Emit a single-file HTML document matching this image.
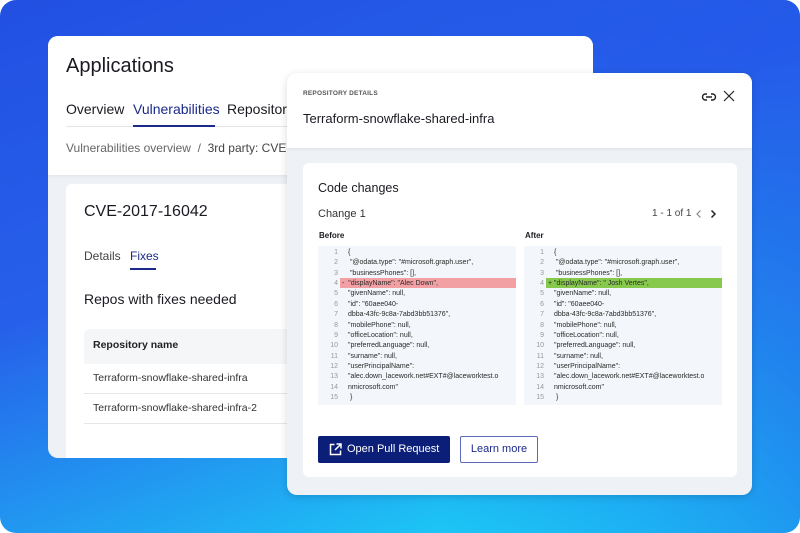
<!DOCTYPE html>
<html><head><meta charset="utf-8"><style>
*{margin:0;padding:0;box-sizing:border-box}
html,body{width:800px;height:533px;overflow:hidden;background:#fff}
body{font-family:"Liberation Sans",sans-serif;color:#1a1a22;position:relative}
.bg{position:absolute;left:0;top:0;width:800px;height:533px;border-radius:16px;overflow:hidden;
background:linear-gradient(160deg,#2250e2 0%,#2660ea 40%,#20a8f2 72%,#18ecfa 100%)}
.bg:after{content:"";position:absolute;inset:0;background:linear-gradient(90deg,rgba(0,0,0,0) 55%,rgba(35,85,232,.55) 100%)}
.a{position:absolute}
.card1{left:48px;top:36px;width:545px;height:422px;background:#eef1f5;border-radius:10px;overflow:hidden}
.card1 .hd{position:absolute;left:0;top:0;width:100%;height:139px;background:#fff;box-shadow:0 1px 3px rgba(0,0,0,.06)}
.inner1{position:absolute;left:18px;top:148px;width:540px;height:300px;background:#fff;border-radius:6px}
.modal{left:287px;top:73px;width:465px;height:422px;background:#eef2f6;border-radius:10px;overflow:hidden;box-shadow:0 2px 8px rgba(0,0,0,.15)}
.modal .hd{position:absolute;left:0;top:0;width:100%;height:75px;background:#fff;box-shadow:0 1px 3px rgba(0,0,0,.08)}
.inner2{position:absolute;left:16px;top:90px;width:434px;height:314px;background:#fff;border-radius:6px}
.code{position:absolute;top:246px;width:198px;height:159px;background:#f3f6fa;font-size:7px;color:#2a2a2a}
.ln{position:absolute;left:0;width:20px;text-align:right;color:#999}
.tx{position:absolute;left:30px;white-space:pre}
.hl{position:absolute;left:22px;width:176px;height:10px}
</style></head><body>
<div class="bg"></div>

<div class="a card1">
 <div class="hd"></div>
 <div class="a" style="left:18px;top:19px;font-size:20px">Applications</div>
 <div class="a" style="left:18px;top:65px;font-size:14px">Overview</div>
 <div class="a" style="left:85px;top:65px;font-size:14px;color:#1a2a8a">Vulnerabilities</div>
 <div class="a" style="left:179px;top:65px;font-size:14px">Repositories</div>
 <div class="a" style="left:18px;top:90px;width:520px;height:1px;background:#e3e5ea"></div>
 <div class="a" style="left:85px;top:89px;width:82px;height:2px;background:#1a2a8a"></div>
 <div class="a" style="left:18px;top:105px;font-size:12px;color:#666">Vulnerabilities overview &nbsp;/&nbsp; <span style="color:#444">3rd party: CVE-2017-16042</span></div>
 <div class="inner1">
  <div class="a" style="left:18px;top:19px;font-size:16px">CVE-2017-16042</div>
  <div class="a" style="left:18px;top:65px;font-size:12px;color:#444">Details</div>
  <div class="a" style="left:64px;top:65px;font-size:12px;color:#1a2a8a">Fixes</div>
  <div class="a" style="left:64px;top:84px;width:26px;height:2px;background:#1a2a8a"></div>
  <div class="a" style="left:18px;top:107px;font-size:14px">Repos with fixes needed</div>
  <div class="a" style="left:18px;top:145px;width:520px;height:35px;background:#f5f6f8;border-radius:6px 0 0 0"></div>
  <div class="a" style="left:27px;top:155px;font-size:10.5px;font-weight:bold;color:#222">Repository name</div>
  <div class="a" style="left:27px;top:188px;font-size:10.5px;color:#333">Terraform-snowflake-shared-infra</div>
  <div class="a" style="left:18px;top:209px;width:520px;height:1px;background:#e6e7ea"></div>
  <div class="a" style="left:27px;top:218px;font-size:10.5px;color:#333">Terraform-snowflake-shared-infra-2</div>
  <div class="a" style="left:18px;top:239px;width:520px;height:1px;background:#e6e7ea"></div>
 </div>
</div>

<div class="a modal">
 <div class="hd"></div>
 <div class="a" style="left:16px;top:17px;font-size:6.5px;font-weight:bold;color:#555;letter-spacing:.2px">REPOSITORY DETAILS</div>
 <div class="a" style="left:16px;top:38px;font-size:13px">Terraform-snowflake-shared-infra</div>
 <svg class="a" style="left:414px;top:18px" width="16" height="12" viewBox="0 0 16 12"><path d="M6 3H4.5a3 3 0 000 6H6M10 3h1.5a3 3 0 010 6H10M5 6h6" fill="none" stroke="#222" stroke-width="1.4"/></svg>
 <svg class="a" style="left:436px;top:17px" width="12" height="12" viewBox="0 0 12 12"><path d="M1 1l10 10M11 1L1 11" stroke="#222" stroke-width="1.2"/></svg>
 <div class="inner2">
  <div class="a" style="left:15px;top:18px;font-size:12.5px">Code changes</div>
  <div class="a" style="left:15px;top:45px;font-size:11px;color:#333">Change 1</div>
  <div class="a" style="left:349px;top:45px;font-size:10px;color:#444">1 - 1 of 1</div>
  <svg class="a" style="left:392px;top:46px" width="8" height="10" viewBox="0 0 8 10"><path d="M5.5 1.5L2 5l3.5 3.5" fill="none" stroke="#888" stroke-width="1.2"/></svg>
  <svg class="a" style="left:406px;top:46px" width="8" height="10" viewBox="0 0 8 10"><path d="M2.5 1.5L6 5 2.5 8.5" fill="none" stroke="#222" stroke-width="1.5"/></svg>
  <div class="a" style="left:16px;top:68px;font-size:8px;font-weight:bold">Before</div>
  <div class="a" style="left:222px;top:68px;font-size:8px;font-weight:bold">After</div>
 </div>
</div>

<div class="code" style="left:318px">
 <div class="hl" style="top:32px;background:#f3a0a4"></div>
 <div class="ln" style="top:3px">1</div><div class="tx" style="top:3px">{</div>
 <div class="ln" style="top:13.4px">2</div><div class="tx" style="top:13.4px"> "@odata.type": "#microsoft.graph.user",</div>
 <div class="ln" style="top:23.7px">3</div><div class="tx" style="top:23.7px"> "businessPhones": [],</div>
 <div class="ln" style="top:34px">4</div><div class="tx" style="top:34px;left:24px">-  "displayName": "Alec Down",</div>
 <div class="ln" style="top:44.4px">5</div><div class="tx" style="top:44.4px">"givenName": null,</div>
 <div class="ln" style="top:54.8px">6</div><div class="tx" style="top:54.8px">"id": "60aee040-</div>
 <div class="ln" style="top:65.2px">7</div><div class="tx" style="top:65.2px">dbba-43fc-9c8a-7abd3bb51376",</div>
 <div class="ln" style="top:75.5px">8</div><div class="tx" style="top:75.5px">"mobilePhone": null,</div>
 <div class="ln" style="top:85.9px">9</div><div class="tx" style="top:85.9px">"officeLocation": null,</div>
 <div class="ln" style="top:96.3px">10</div><div class="tx" style="top:96.3px">"preferredLanguage": null,</div>
 <div class="ln" style="top:106.6px">11</div><div class="tx" style="top:106.6px">"surname": null,</div>
 <div class="ln" style="top:117px">12</div><div class="tx" style="top:117px">"userPrincipalName":</div>
 <div class="ln" style="top:127.4px">13</div><div class="tx" style="top:127.4px">"alec.down_lacework.net#EXT#@laceworktest.o</div>
 <div class="ln" style="top:137.8px">14</div><div class="tx" style="top:137.8px">nmicrosoft.com"</div>
 <div class="ln" style="top:148px">15</div><div class="tx" style="top:148px"> }</div>
</div>
<div class="code" style="left:524px">
 <div class="hl" style="top:32px;background:#86c94c"></div>
 <div class="ln" style="top:3px">1</div><div class="tx" style="top:3px">{</div>
 <div class="ln" style="top:13.4px">2</div><div class="tx" style="top:13.4px"> "@odata.type": "#microsoft.graph.user",</div>
 <div class="ln" style="top:23.7px">3</div><div class="tx" style="top:23.7px"> "businessPhones": [],</div>
 <div class="ln" style="top:34px">4</div><div class="tx" style="top:34px;left:24px">+ "displayName": " Josh Vertes",</div>
 <div class="ln" style="top:44.4px">5</div><div class="tx" style="top:44.4px">"givenName": null,</div>
 <div class="ln" style="top:54.8px">6</div><div class="tx" style="top:54.8px">"id": "60aee040-</div>
 <div class="ln" style="top:65.2px">7</div><div class="tx" style="top:65.2px">dbba-43fc-9c8a-7abd3bb51376",</div>
 <div class="ln" style="top:75.5px">8</div><div class="tx" style="top:75.5px">"mobilePhone": null,</div>
 <div class="ln" style="top:85.9px">9</div><div class="tx" style="top:85.9px">"officeLocation": null,</div>
 <div class="ln" style="top:96.3px">10</div><div class="tx" style="top:96.3px">"preferredLanguage": null,</div>
 <div class="ln" style="top:106.6px">11</div><div class="tx" style="top:106.6px">"surname": null,</div>
 <div class="ln" style="top:117px">12</div><div class="tx" style="top:117px">"userPrincipalName":</div>
 <div class="ln" style="top:127.4px">13</div><div class="tx" style="top:127.4px">"alec.down_lacework.net#EXT#@laceworktest.o</div>
 <div class="ln" style="top:137.8px">14</div><div class="tx" style="top:137.8px">nmicrosoft.com"</div>
 <div class="ln" style="top:148px">15</div><div class="tx" style="top:148px"> }</div>
</div>

<div class="a" style="left:318px;top:436px;width:132px;height:27px;background:#0c1f78;border-radius:2px;color:#fff;font-size:11px;line-height:27px;padding-left:29px">Open Pull Request</div>
<svg class="a" style="left:329px;top:443px" width="13" height="13" viewBox="0 0 13 13"><path d="M5.5 1.5H1.5v10h10V7.5M7.5 1h4.5v4.5M12 1L6 7" fill="none" stroke="#fff" stroke-width="1.5"/></svg>
<div class="a" style="left:460px;top:436px;width:78px;height:27px;border:1px solid #5b6bb8;border-radius:2px;color:#1a2a8a;font-size:11px;line-height:25px;text-align:center">Learn more</div>
</body></html>
